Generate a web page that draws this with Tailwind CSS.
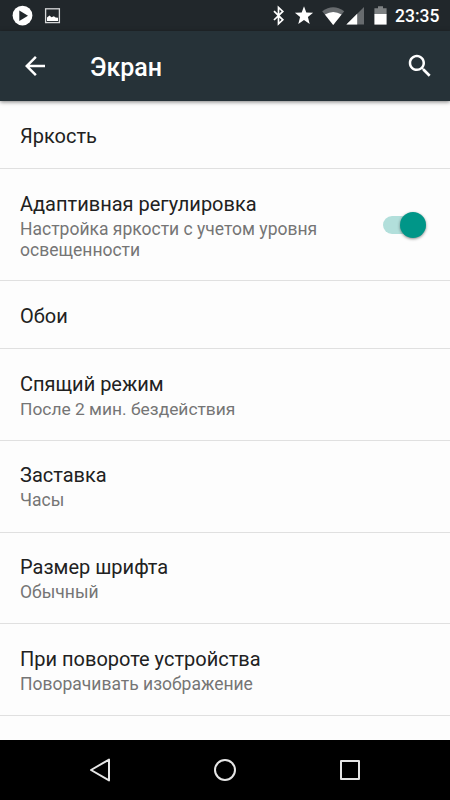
<!DOCTYPE html>
<html lang="ru">
<head>
<meta charset="utf-8">
<meta name="viewport" content="width=device-width, initial-scale=1">
<title>Экран</title>
<script src="https://cdn.jsdelivr.net/npm/@tailwindcss/browser@4"></script>
</head>
<body class="font-[Roboto,sans-serif] antialiased">
<div class="flex h-[800px] w-[450px] flex-col overflow-hidden bg-[#fdfdfd]">
  <!-- Status bar -->
  <div class="flex h-[31px] shrink-0 items-center bg-[#21272b] pr-[10px] pl-3">
    <svg class="h-[31px] w-[50px]" viewBox="12 0 50 31">
      <circle cx="22.5" cy="15.6" r="9.9" fill="#fff"/>
      <path d="M19.3 10.600v10.300l8.700-5.100z" fill="#21272b"/>
      <rect x="45.600" y="8.800" width="13.800" height="13.800" fill="none" stroke="#d6d8d9" stroke-width="1.300"/>
      <path d="M47 21v-3.600l2.500-1.800 2 1.600 2.400-.9 1.700 1.300 2.400.2V21z" fill="#fff"/>
    </svg>
    <svg class="ml-auto h-[31px] w-[122px]" viewBox="270 0 122 31">
      <path d="M274 11.200l8.800 8.600-4.300 4V7.400l4.300 4-8.800 8.600" fill="none" stroke="#fff" stroke-width="1.700"/>
      <path d="M304 6.300l2.300 6.200 6.800.3-5.200 4.300 1.800 6.900-5.700-3.900-5.700 3.900 1.800-6.900-5.200-4.300 6.800-.3z" fill="#fff"/>
      <path d="M322.200 11.300Q333.200 3 344.200 11.300L333.200 25z" fill="#676b6e"/>
      <path d="M324.900 14.600Q333.200 9.300 341.600 14.600L333.200 25z" fill="#fff"/>
      <path d="M346.400 24.500L364 7v17.500z" fill="#676b6e"/>
      <path d="M346.400 24.500l10.800-10.800v10.800z" fill="#fff"/>
      <path d="M374.400 8.200h3.600V6.300h5v1.900h3.600v6h-12.200z" fill="#7d8183"/>
      <path d="M374.400 14h12.200v10.600h-12.200z" fill="#fff"/>
    </svg>
    <span class="ml-[3px] w-[45px] pt-[2px] text-[17.5px] leading-[29px] font-medium whitespace-nowrap text-white">23:35</span>
  </div>
  <!-- App bar -->
  <header class="relative flex h-[70px] shrink-0 items-center bg-[#263238] pr-[15px] pl-5 shadow-[0_1px_4px_rgba(0,0,0,0.5)]">
    <svg class="size-[30px]" viewBox="0 0 24 24" fill="#fff"><path d="M20 11H7.800l5.600-5.600L12 4l-8 8 8 8 1.400-1.400L7.800 13H20v-2z"/></svg>
    <h1 class="mt-[3px] ml-10 text-[25px] leading-[30px] font-medium text-white">Экран</h1>
    <svg class="ml-auto size-[30px]" viewBox="0 0 24 24" fill="#fff"><path d="M15.500 14h-.8l-.3-.3c1-1.100 1.600-2.600 1.600-4.200C16 5.900 13.100 3 9.500 3S3 5.900 3 9.500 5.900 16 9.500 16c1.600 0 3.100-.6 4.200-1.600l.3.3v.8l5 5 1.500-1.500-5-5zm-6 0C7 14 5 12 5 9.500S7 5 9.500 5 14 7 14 9.500 12 14 9.500 14z"/></svg>
  </header>
  <!-- Settings list -->
  <main class="flex-1 text-[20px] leading-[24px] text-[#212121]">
    <section class="flex h-[68px] items-center border-b border-[#e0e0e0] px-5 pt-[2px]">Яркость</section>
    <section class="flex h-[112px] items-center border-b border-[#e0e0e0] pr-[24px] pl-5">
      <div class="pt-[3px]">
        <div>Адаптивная регулировка</div>
        <div class="mt-[3px] w-[320px] text-[17.5px] leading-[20.5px] text-[#757575]">Настройка яркости с учетом уровня освещенности</div>
      </div>
      <div class="ml-auto flex h-[18px] w-[43px] items-center justify-end rounded-full bg-[#b2dfdb]">
        <div class="size-[26px] shrink-0 rounded-full bg-[#009688] shadow-[0_1px_3px_rgba(0,0,0,0.45)]"></div>
      </div>
    </section>
    <section class="flex h-[68px] items-center border-b border-[#e0e0e0] px-5 pt-[2px]">Обои</section>
    <section class="flex h-[92px] flex-col border-b border-[#e0e0e0] px-5 pt-[23px]">
      <div>Спящий режим</div>
      <div class="mt-[3px] text-[17.4px] leading-[20px] text-[#757575]">После 2 мин. бездействия</div>
    </section>
    <section class="flex h-[92px] flex-col border-b border-[#e0e0e0] px-5 pt-[22px]">
      <div>Заставка</div>
      <div class="mt-[3px] text-[17.5px] leading-[20px] text-[#757575]">Часы</div>
    </section>
    <section class="flex h-[91px] flex-col border-b border-[#e0e0e0] px-5 pt-[22px]">
      <div>Размер шрифта</div>
      <div class="mt-[3px] text-[17.5px] leading-[20px] text-[#757575]">Обычный</div>
    </section>
    <section class="flex h-[92px] flex-col border-b border-[#e0e0e0] px-5 pt-[23px]">
      <div>При повороте устройства</div>
      <div class="mt-[3px] text-[17.5px] leading-[20px] text-[#757575]">Поворачивать изображение</div>
    </section>
  </main>
  <!-- Navigation bar -->
  <nav class="flex h-[60px] shrink-0 items-center justify-center gap-[95px] bg-black">
    <svg class="size-[30px]" viewBox="0 0 30 30" fill="none" stroke="#e6e6e6" stroke-width="2" stroke-linejoin="round"><path d="M6 15L24 4.600v20.800z"/></svg>
    <svg class="size-[30px]" viewBox="0 0 30 30" fill="none" stroke="#e6e6e6" stroke-width="2"><circle cx="15" cy="15" r="10"/></svg>
    <svg class="size-[30px]" viewBox="0 0 30 30" fill="none" stroke="#e6e6e6" stroke-width="2" stroke-linejoin="round"><rect x="6" y="6" width="18" height="18"/></svg>
  </nav>
</div>
</body>
</html>
